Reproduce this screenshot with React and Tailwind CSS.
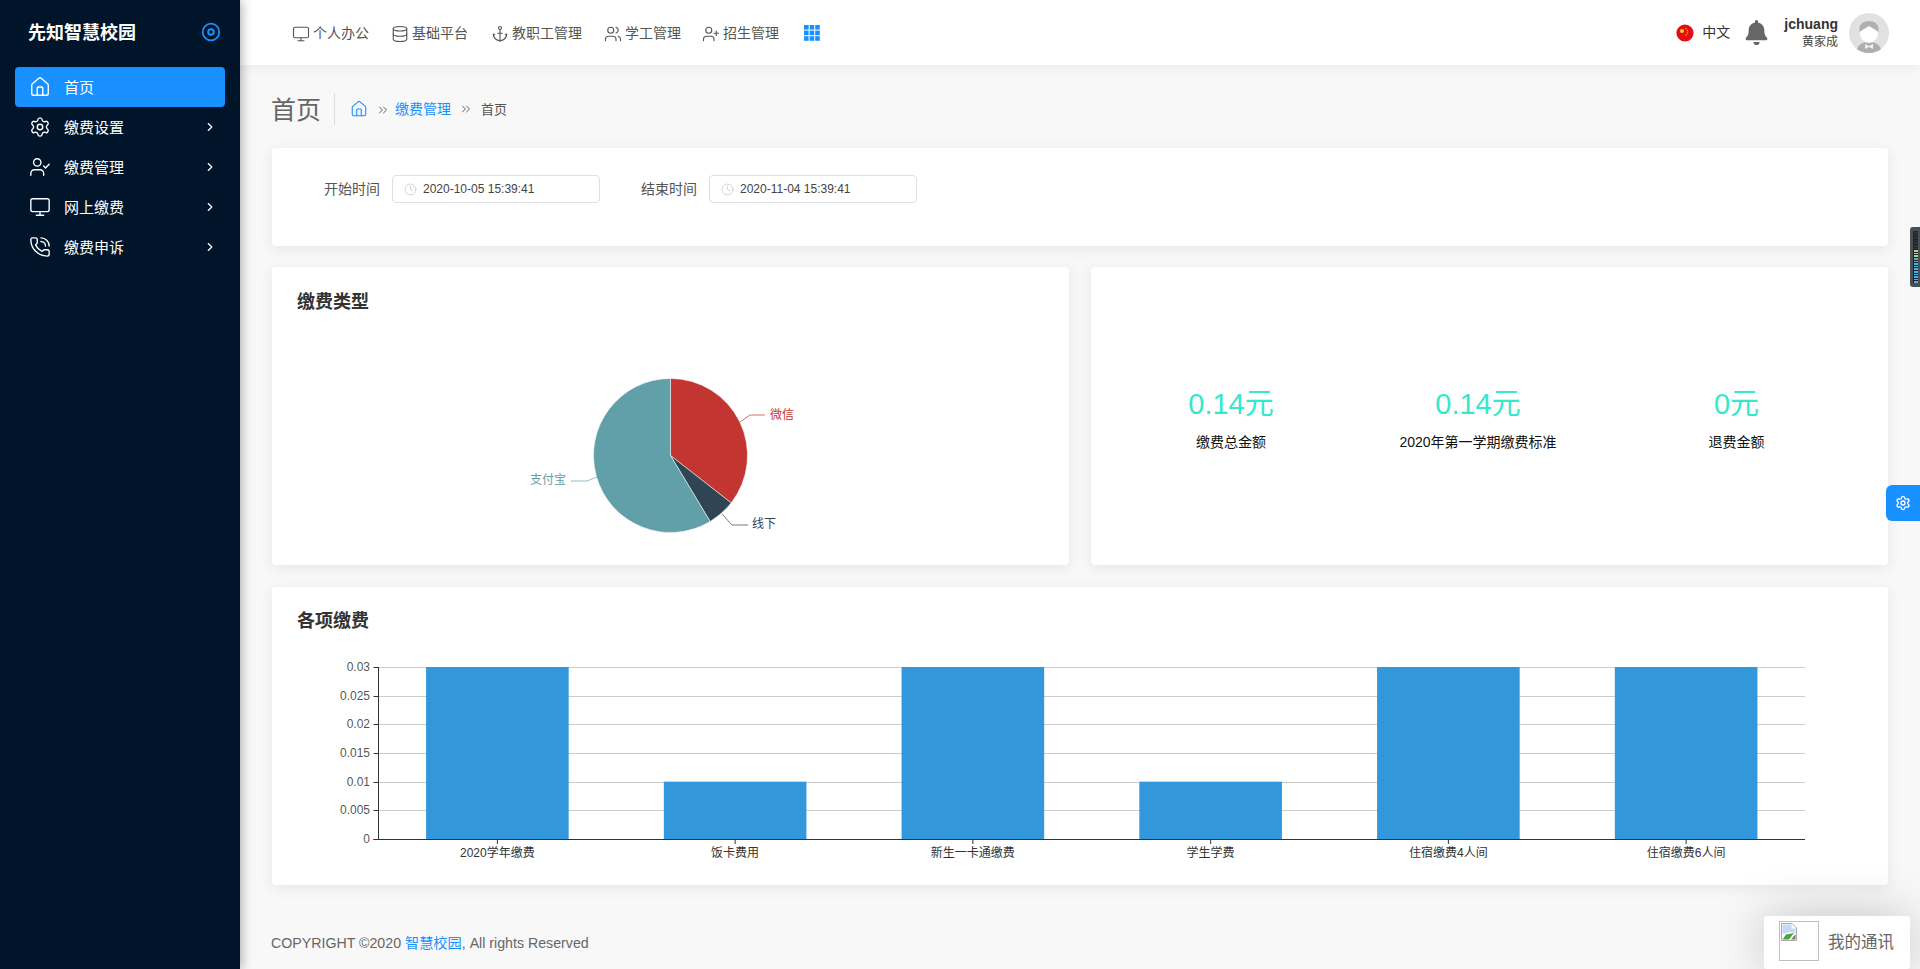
import React from "react";
import { House, Settings, UserCheck, Monitor, PhoneCall, ChevronRight, ChevronsRight, Database, Anchor, Users, UserPlus, Clock } from "lucide-react";
import { FaBell } from "react-icons/fa";

const SANS = "font-['Liberation_Sans','Noto_Sans_CJK_SC',sans-serif]";

function Logo() {
  return (
    <svg width="20" height="20" viewBox="0 0 20 20" fill="none" stroke="#1890ff">
      <circle cx="10" cy="10" r="8.3" strokeWidth="1.8" />
      <circle cx="10" cy="10" r="2.8" strokeWidth="2" />
    </svg>
  );
}

const sideItems = [
  { label: "首页", Icon: House, active: true },
  { label: "缴费设置", Icon: Settings },
  { label: "缴费管理", Icon: UserCheck },
  { label: "网上缴费", Icon: Monitor },
  { label: "缴费申诉", Icon: PhoneCall },
];

function Sidebar() {
  return (
    <aside className="w-[240px] shrink-0 h-full bg-[#001529] relative z-20 shadow-[2px_0_10px_rgba(0,0,0,0.3)] font-['Noto_Sans_CJK_SC',sans-serif]">
      <div className="h-[67px] pl-[28px] pr-[19px] pb-[4px] flex items-center justify-between">
        <span className="text-[18px] font-bold text-white">先知智慧校园</span>
        <Logo />
      </div>
      <nav className="px-[15px] flex flex-col">
        {sideItems.map(({ label, Icon, active }) => (
          <div key={label} className={`h-[40px] flex items-center pl-[14px] pr-[8px] rounded-[4px] text-white text-[15px] ${active ? "bg-[#1890ff]" : ""}`}>
            <Icon size={22} strokeWidth={1.5} className="shrink-0" />
            <span className="ml-[13px] flex-1">{label}</span>
            {!active && <ChevronRight size={14} strokeWidth={2} />}
          </div>
        ))}
      </nav>
    </aside>
  );
}

const topItems = [
  { label: "个人办公", Icon: Monitor, w: "w-[99px]" },
  { label: "基础平台", Icon: Database, w: "w-[100px]" },
  { label: "教职工管理", Icon: Anchor, w: "w-[113px]" },
  { label: "学工管理", Icon: Users, w: "w-[98px]" },
  { label: "招生管理", Icon: UserPlus, w: "w-[102px]" },
];

function AppGrid() {
  const cells = [];
  for (let r = 0; r < 3; r++) for (let c = 0; c < 3; c++) cells.push(<rect key={`${r}${c}`} x={c * 5.6} y={r * 5.6} width="4.6" height="4.6" />);
  return <svg width="16" height="16" viewBox="0 0 16 16" fill="#1890ff" className="-mt-[2px]">{cells}</svg>;
}

function Flag() {
  return (
    <svg width="18" height="18" viewBox="0 0 18 18">
      <circle cx="9" cy="9" r="8.6" fill="#e60d12" />
      <circle cx="6" cy="7" r="2" fill="#f8d21a" />
      <circle cx="10" cy="4.5" r="0.7" fill="#f8d21a" />
      <circle cx="11.5" cy="6.5" r="0.7" fill="#f8d21a" />
      <circle cx="11.5" cy="9" r="0.7" fill="#f8d21a" />
      <circle cx="10" cy="11" r="0.7" fill="#f8d21a" />
    </svg>
  );
}

function Avatar() {
  return (
    <svg width="40" height="40" viewBox="0 0 40 40" className="shrink-0">
      <defs><clipPath id="av"><circle cx="20" cy="20" r="20" /></clipPath></defs>
      <g clipPath="url(#av)">
        <rect width="40" height="40" fill="#e1e1e1" />
        <path d="M7 40 C8 32 13 29 20 29 C27 29 32 32 33 40 Z" fill="#aeaeae" />
        <ellipse cx="20" cy="20" rx="9" ry="10" fill="#fff" />
        <path d="M10.5 19 C9 11 15 8 20 8 C25 8 31 11 29.5 19 C27 17 23 15 20 13 C17 15 13 17 10.5 19 Z" fill="#b0b0b0" />
        <path d="M16 31 L20 33 L24 31 V36 L20 34 L16 36 Z" fill="#f0f0f0" />
      </g>
    </svg>
  );
}

function Header() {
  return (
    <header className={`h-[65px] shrink-0 bg-white relative z-10 shadow-[0_2px_12px_rgba(0,0,0,0.06)] flex items-center pl-[52px] pr-[31px] ${SANS}`}>
      <div className="flex items-center text-[14px] text-[#555] pt-[2px]">
        {topItems.map(({ label, Icon, w }) => (
          <div key={label} className={`flex items-center gap-[3px] ${w}`}>
            <Icon size={18} strokeWidth={1.5} className="shrink-0" />
            <span>{label}</span>
          </div>
        ))}
        <AppGrid />
      </div>
      <div className="ml-auto flex items-center">
        <Flag />
        <span className="ml-[8px] text-[14px] text-[#333]">中文</span>
        <FaBell className="ml-[14px] text-[#666] text-[25px]" />
        <div className="ml-[15px] mr-[11px] flex flex-col items-end leading-none">
          <span className="text-[14px] font-bold text-[#333] -mt-[1px]">jchuang</span>
          <span className="text-[12px] text-[#444] mt-[5px]">黄家成</span>
        </div>
        <Avatar />
      </div>
    </header>
  );
}

function Breadcrumb() {
  return (
    <div className={`h-[83px] shrink-0 flex items-center pt-[5px] ${SANS}`}>
      <h1 className="text-[25px] font-normal text-[#666] leading-none w-[62px] -ml-[1px] pt-[2px]">首页</h1>
      <div className="w-px h-[32px] bg-[#dcdcdc] ml-[1px]" />
      <div className="flex items-center pl-[15px] text-[14px] pt-[1px]">
        <House size={18} strokeWidth={1.5} className="text-[#1890ff] -mt-[2px]" />
        <ChevronsRight size={14} strokeWidth={1.6} className="ml-[8px] text-[#555]" />
        <span className="ml-[5px] text-[#1890ff]">缴费管理</span>
        <ChevronsRight size={14} strokeWidth={1.6} className="ml-[8px] text-[#555] -mt-[2px]" />
        <span className="ml-[8px] text-[13px] text-[#555]">首页</span>
      </div>
    </div>
  );
}

function DateField({ label, value, labelClass }) {
  return (
    <div className={`flex items-center ${labelClass}`}>
      <span className="text-[14px] text-[#555] mr-[12px]">{label}</span>
      <div className="w-[208px] h-[28px] border border-[#dfdfe6] rounded-[4px] flex items-center pl-[11px] bg-white">
        <Clock size={13} strokeWidth={1.5} className="text-[#c9c9d4]" />
        <span className="ml-[6px] text-[12px] text-[#444]">{value}</span>
      </div>
    </div>
  );
}

const CARD = "bg-white rounded-[4px] shadow-[0_3px_14px_rgba(50,50,93,0.09)]";

function Card({ className = "", children }) {
  return <section className={`${CARD} ${className}`}>{children}</section>;
}

function polar(r, deg) {
  const a = ((deg - 90) * Math.PI) / 180;
  return [670.5 + r * Math.cos(a), 455.5 + r * Math.sin(a)];
}
function slice(a0, a1) {
  const [x0, y0] = polar(77, a0);
  const [x1, y1] = polar(77, a1);
  return `M670.5 455.5 L${x0} ${y0} A77 77 0 ${a1 - a0 > 180 ? 1 : 0} 1 ${x1} ${y1} Z`;
}

function Pie() {
  return (
    <svg viewBox="272 316 797 249" className="block w-[797px] h-[249px] font-['Noto_Sans_CJK_SC',sans-serif]">
      <path d={slice(0, 128)} fill="#c23531" stroke="#fff" strokeWidth="0.5" />
      <path d={slice(128, 149)} fill="#2f4554" stroke="#fff" strokeWidth="0.5" />
      <path d={slice(149, 360)} fill="#61a0a8" stroke="#fff" strokeWidth="0.5" />
      <polyline points="740,422 750,415 765,415" fill="none" stroke="#c23531" opacity="0.7" />
      <polyline points="722,514 732,525 748,525" fill="none" stroke="#2f4554" opacity="0.7" />
      <polyline points="597,477 587,481 571,481" fill="none" stroke="#61a0a8" opacity="0.7" />
      <text x="770" y="419" fontSize="12" fill="#c23531">微信</text>
      <text x="752" y="528" fontSize="12" fill="#2f4554">线下</text>
      <text x="530" y="484" fontSize="12" fill="#61a0a8">支付宝</text>
    </svg>
  );
}

const bars = [
  ["2020学年缴费", 0.03],
  ["饭卡费用", 0.01],
  ["新生一卡通缴费", 0.03],
  ["学生学费", 0.01],
  ["住宿缴费4人间", 0.03],
  ["住宿缴费6人间", 0.03],
];
const ticks = ["0", "0.005", "0.01", "0.015", "0.02", "0.025", "0.03"];

function BarChart() {
  const left = 378.5, right = 1805, top = 668, bottom = 840;
  const step = (right - left) / 6;
  return (
    <svg viewBox="272 636 1616 249" className="block w-[1616px] h-[249px] font-['Liberation_Sans','Noto_Sans_CJK_SC',sans-serif]">
      {ticks.map((t, i) => {
        const y = Math.round(bottom - ((bottom - top) * i) / 6) + 0.5;
        return (
          <g key={t}>
            {i > 0 && <line x1={left} x2={right} y1={y} y2={y} stroke="#ccc" />}
            <line x1={left - 5} x2={left} y1={y} y2={y} stroke="#333" />
            <text x={370} y={y + 3} fontSize="12" fill="#333" fillOpacity="0.85" textAnchor="end">{t}</text>
          </g>
        );
      })}
      {bars.map(([name, v], i) => {
        const cx = left + step * (i + 0.5);
        const h = ((bottom - top) * v) / 0.03;
        return (
          <g key={name}>
            <rect x={cx - 71.3} y={bottom - h} width={142.6} height={h} fill="#3398db" />
            <line x1={cx} x2={cx} y1={bottom} y2={bottom + 5} stroke="#333" />
            <text x={cx} y={858} fontSize="12" fill="#333" textAnchor="middle">{name}</text>
          </g>
        );
      })}
      <line x1={left} x2={left} y1={top} y2={bottom} stroke="#333" />
      <line x1={left - 5} x2={right} y1={bottom + 0.5} y2={bottom + 0.5} stroke="#333" />
    </svg>
  );
}

function Stat({ value, label }) {
  return (
    <div className="flex flex-col items-center pt-[6px]">
      <div className="text-[29px] leading-[36px] text-[#36e8cb]">{value}</div>
      <div className="mt-[10px] text-[14px] leading-[20px] text-[#111]">{label}</div>
    </div>
  );
}

function Content() {
  return (
    <main className={`flex-1 min-h-0 flex flex-col px-[32px] ${SANS}`}>
      <Breadcrumb />
      <Card className="h-[98px] shrink-0 flex items-start pt-[27px]">
        <DateField label="开始时间" value="2020-10-05 15:39:41" labelClass="ml-[52px]" />
        <DateField label="结束时间" value="2020-11-04 15:39:41" labelClass="ml-[41px]" />
      </Card>
      <div className="mt-[21px] h-[298px] shrink-0 grid grid-cols-[797px_797px] gap-x-[22px]">
        <Card>
          <h2 className="pt-[21px] pl-[25px] text-[18px] leading-[28px] font-bold text-[#333]">缴费类型</h2>
          <Pie />
        </Card>
        <Card className="grid grid-cols-[280px_214px_303px] items-center">
          <Stat value="0.14元" label="缴费总金额" />
          <Stat value="0.14元" label="2020年第一学期缴费标准" />
          <Stat value="0元" label="退费金额" />
        </Card>
      </div>
      <Card className="mt-[22px] h-[298px] shrink-0">
        <h2 className="pt-[20px] pl-[25px] text-[18px] leading-[28px] font-bold text-[#333]">各项缴费</h2>
        <BarChart />
      </Card>
      <footer className="mt-[48px] -ml-[1px] text-[14.2px] leading-[20px] text-[#666]">
        COPYRIGHT ©2020 <span className="text-[#1890ff]">智慧校园</span>, All rights Reserved
      </footer>
    </main>
  );
}

function Floating() {
  const levels = [];
  for (let i = 0; i < 20; i++) {
    const color = i < 7 ? "#2a3338" : i < 10 ? "#b9d66a" : "#3db4ea";
    levels.push(<div key={i} className="h-[1.6px] w-[4px]" style={{ backgroundColor: color }} />);
  }
  return (
    <>
      <div className="absolute top-[227px] right-0 w-[10px] h-[60px] bg-[#4a4f55] rounded-l-[3px] pl-[3px] pt-[4px] z-30">
        <div className="h-[52px] w-[5px] bg-[#1e2428] flex flex-col gap-[1px] items-center pt-[1px]">
          {levels}
        </div>
      </div>
      <div className="absolute top-[485px] right-0 w-[34px] h-[36px] bg-[#1890ff] rounded-l-[6px] flex items-center justify-center z-30">
        <Settings size={16} strokeWidth={2} className="text-white" />
      </div>
      <div className={`absolute right-[10px] bottom-0 w-[146px] h-[53px] bg-white rounded-[3px] shadow-[0_0_50px_rgba(0,0,0,0.22)] flex items-center pl-[15px] z-30 ${SANS}`}>
        <div className="w-[40px] h-[40px] border border-[#c0c0c0] shrink-0 -mt-[3px]">
          <svg width="16" height="18" viewBox="0 0 16 18" className="mt-[1px] ml-[1px]">
            <path d="M0.5 0.5 H11 L15.5 5 V17.5 H0.5 Z" fill="#fff" stroke="#a9a9a9" />
            <path d="M1.5 1.5 H10.5 V5.5 H14.5 V10 L9 9 L1.5 11 Z" fill="#c6d9f2" />
            <path d="M1.5 16.5 L5 11.5 L13 10 L8 16.5 Z" fill="#4da33c" />
            <path d="M10 16.5 L14.5 11 V16.5 Z" fill="#7b7b7b" />
          </svg>
        </div>
        <span className="ml-[9px] text-[16.5px] text-[#666]">我的通讯</span>
      </div>
    </>
  );
}

export default function App() {
  return (
    <div className="relative w-full h-screen overflow-hidden flex bg-[#f8f8f8]">
      <Sidebar />
      <div className="flex-1 min-w-0 flex flex-col">
        <Header />
        <Content />
      </div>
      <Floating />
    </div>
  );
}
